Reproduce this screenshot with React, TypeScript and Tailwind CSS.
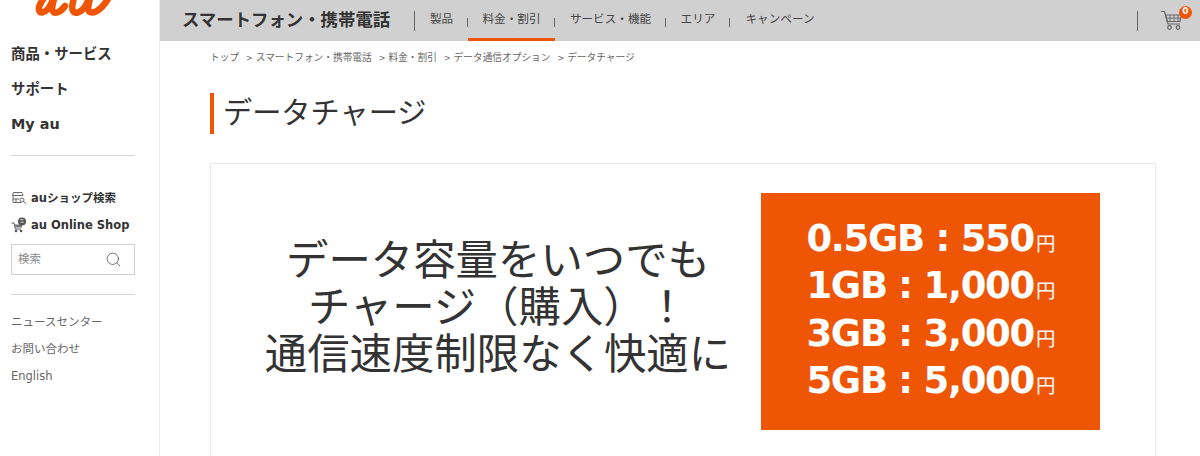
import { Search } from 'lucide-react';

const font = { fontFamily: '"DejaVu Sans", "Noto Sans CJK JP", sans-serif' };

const navItems = [
  { label: '製品', w: 'w-[53px]' },
  { label: '料金・割引', w: 'w-[87px]', active: true },
  { label: 'サービス・機能', w: 'w-[111px]' },
  { label: 'エリア', w: 'w-[64px]' },
  { label: 'キャンペーン', w: 'w-[100px]' },
];

const crumbs = ['トップ', 'スマートフォン・携帯電話', '料金・割引', 'データ通信オプション', 'データチャージ'];

const prices = ['0.5GB : 550', '1GB : 1,000', '3GB : 3,000', '5GB : 5,000'];

function Logo() {
  return (
    <svg width="78" height="17" viewBox="0 0 78 17" className="ml-[34px]" fill="none">
      <path d="M12 -5 C8 1 4 6 5 10 C6 14 10 13 14 9 C17 5 19 0 21 -5 C19 3 17 9 19 11.5 C21 14 26 13 31 6" stroke="#ee5505" strokeWidth="6.5" strokeLinecap="round" />
      <path d="M41 -6 C39 2 37 8 39 11 C41 14 46 13 50 8 C53 4 55 -1 57 -6 C55 3 53 9 55 11.5 C58 14 66 12 74 -1" stroke="#ee5505" strokeWidth="6.5" strokeLinecap="round" />
    </svg>
  );
}

function ShopIcon() {
  return (
    <svg width="16" height="14" viewBox="0 0 16 14" fill="none" stroke="#666" strokeWidth="1">
      <path d="M1.5 4.5 L2.5 1.5 H11 L12 4.5 Z M2 4.5 V11.5 H10 M2 8 H8 M5 8 V11.5" />
      <circle cx="11" cy="9" r="2" />
      <path d="M12.5 10.5 L15 12.5" />
    </svg>
  );
}

function OnlineIcon() {
  return (
    <svg width="16" height="16" viewBox="0 0 16 16" fill="none">
      <path d="M0.5 6 H3 L4.5 12 H10" stroke="#555" strokeWidth="1" />
      <path d="M3.5 7.5 H11 V10.5 H4.5 Z" fill="#777" />
      <circle cx="5" cy="14" r="1.3" fill="#555" />
      <circle cx="10" cy="14" r="1.3" fill="#555" />
      <circle cx="11" cy="4.5" r="4" fill="#555" />
      <path d="M9 3 L12.5 2.5 M9.5 5.5 L13 5" stroke="#fff" strokeWidth="0.7" />
    </svg>
  );
}

function CartIcon() {
  return (
    <svg width="24" height="22" viewBox="0 0 24 22" fill="none" stroke="#666" strokeWidth="1.2">
      <path d="M1 1.5 H4.5 L8 14 H20" />
      <path d="M5.5 5 H21.5 L20 11.5 H7.2 Z" />
      <path d="M10 5 V11.5 M14 5 V11.5 M18 5 V11.5 M6.3 8.2 H21" strokeWidth="0.9" />
      <circle cx="9.5" cy="17.5" r="1.8" />
      <circle cx="18" cy="17.5" r="1.8" />
    </svg>
  );
}

export default function App() {
  return (
    <div className="flex h-[456px] w-[1200px] overflow-hidden bg-white text-[#333]" style={font}>
      <aside className="w-[160px] shrink-0 border-r border-[#eeeeee] px-[11px]">
        <div className="-ml-[11px]">
          <Logo />
        </div>
        <ul className="mt-[27px] flex flex-col gap-[14px] text-[14.4px] leading-[21px] font-bold">
          <li>商品・サービス</li>
          <li>サポート</li>
          <li>My au</li>
        </ul>
        <div className="mt-[20px] w-[124px] border-t border-[#d5d5d5]" />
        <ul className="mt-[33px] flex flex-col gap-[9px] text-[11.5px] leading-[18px] font-bold">
          <li className="flex items-center gap-[4px]"><ShopIcon />auショップ検索</li>
          <li className="flex items-center gap-[4px]"><OnlineIcon />au Online Shop</li>
        </ul>
        <div className="mt-[10px] flex h-[31px] w-[124px] items-center justify-between border border-[#d0d0d0] pr-[12px] pl-[6px] text-[11.5px] text-[#888]">
          <span>検索</span>
          <Search size={17} strokeWidth={1.1} className="text-[#555]" />
        </div>
        <div className="mt-[19px] w-[124px] border-t border-[#d5d5d5]" />
        <ul className="mt-[18px] flex flex-col gap-[9px] text-[11.5px] leading-[18px] text-[#666]">
          <li>ニュースセンター</li>
          <li>お問い合わせ</li>
          <li>English</li>
        </ul>
      </aside>

      <main className="min-w-0 flex-1">
        <header className="flex h-[41px] items-center bg-[#d0d0d0] pl-[22px]">
          <div className="w-[232px] pb-[1px] text-[17.4px] font-bold">スマートフォン・携帯電話</div>
          <div className="h-[20px] w-px bg-[#666]" />
          <nav className="flex h-full">
            {navItems.map((item, i) => (
              <div key={item.label} className={`relative flex h-full items-center justify-center pb-[2px] text-[11.6px] text-[#444] ${item.w}`}>
                {item.label}
                {i < navItems.length - 1 && <span className="absolute top-[18px] right-0 h-[9px] w-px bg-[#666]" />}
                {item.active && <span className="absolute right-0 bottom-0 left-0 h-[3px] bg-[#ee5505]" />}
              </div>
            ))}
          </nav>
          <div className="ml-auto h-[20px] w-px bg-[#666]" />
          <div className="relative mr-[16px] ml-[22px] h-[22px] w-[24px]">
            <CartIcon />
            <span className="absolute -top-[4px] left-[19px] flex h-[13px] w-[13px] items-center justify-center rounded-full bg-[#ee5505] text-[9px] font-bold text-white">0</span>
          </div>
        </header>

        <div className="px-[50px]">
          <ol className="mt-[9px] flex h-[16px] items-center text-[9.7px] leading-[16px] text-[#666]">
            {crumbs.map((c, i) => (
              <li key={c} className={i > 0 ? 'ml-[7px]' : ''}>{i > 0 && <span className="mr-[3px] text-[8px]">&gt;</span>}{c}</li>
            ))}
          </ol>
          <h1 className="mt-[27px] flex h-[41px] items-center border-l-[4px] border-[#ee5505] pl-[9px] text-[29.2px] font-normal text-[#333]">データチャージ</h1>

          <section className="mt-[29px] flex h-[320px] w-[946px] items-start border border-[#e8e8e8] pt-[29px] pl-[50px]">
            <p className="mt-[44px] w-[474px] text-center text-[42.4px] leading-[47px] text-[#333]">
              データ容量をいつでも<br />チャージ（購入）！<br />通信速度制限なく快適に
            </p>
            <div className="ml-[26px] flex h-[237px] w-[339px] flex-col items-center justify-center bg-[#ee5505] pb-[4px] text-white">
              {prices.map((p) => (
                <div key={p} className="flex h-[47.3px] w-[250px] items-baseline justify-end text-[37px] leading-[47px] font-bold tracking-[-1.3px] whitespace-pre">
                  {p}<span className="ml-[2px] text-[19.5px] leading-none font-normal tracking-normal">円</span>
                </div>
              ))}
            </div>
          </section>
        </div>
      </main>
    </div>
  );
}
